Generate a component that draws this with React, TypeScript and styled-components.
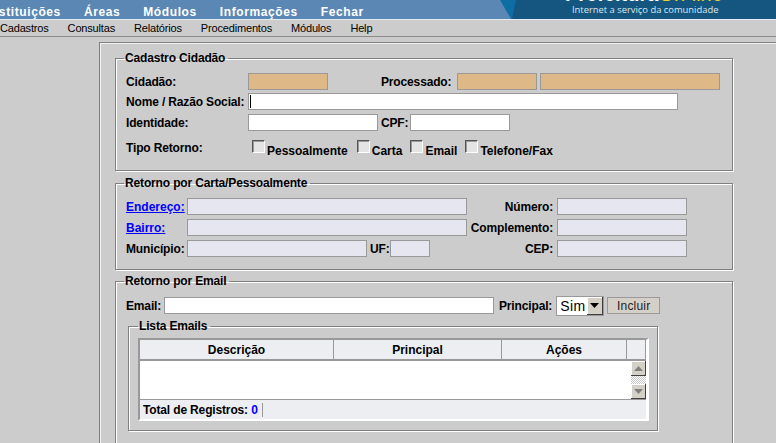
import React from "react";
import styled, { createGlobalStyle } from "styled-components";

const Global = createGlobalStyle`
  html, body { margin: 0; padding: 0; background: #cccccc; }
  body { font-family: "Liberation Sans", Arial, sans-serif; font-size: 12px; color: #000; }
`;

const Page = styled.div`
  width: 776px;
  height: 443px;
  overflow: hidden;
`;

const Header = styled.header`
  display: flex;
  height: 19px;
  background: #5b87b5;
  border-bottom: 1px solid #e4ecf2;
  overflow: hidden;
`;
const TopNav = styled.nav`
  display: flex;
  gap: 23px;
  margin-left: -13px;
  padding-top: 5px;
`;
const TopLink = styled.a`
  color: #fff;
  font-weight: 700;
  font-size: 12px;
  line-height: 14px;
  letter-spacing: 0.6px;
`;
const Brand = styled.div`
  margin-left: auto;
  width: 276px;
  position: relative;
  background: #0c6ea3;
  clip-path: polygon(0 0, 100% 0, 100% 100%, 11px 100%);
  display: flex;
  flex-direction: column;
  align-items: flex-start;
  padding-left: 72px;
  box-sizing: border-box;

  &::before {
    content: "";
    position: absolute;
    inset: 0;
    background: #14567f;
    clip-path: polygon(16px 0, 100% 0, 100% 100%, 12px 100%);
  }
`;
const Wordmark = styled.div`
  position: relative;
  margin-top: -15px;
  margin-left: -7px;
  font-size: 20px;
  line-height: 18px;
  font-weight: 700;
  color: #fff;
  white-space: nowrap;
`;
const WordmarkAccent = styled.span`
  color: #e8d22e;
  font-weight: 400;
`;
const Slogan = styled.div`
  position: relative;
  margin-top: 1px;
  font-family: "Open Sans", sans-serif;
  font-size: 9.4px;
  line-height: 12px;
  color: #dbe6ee;
  white-space: nowrap;
`;

const SubMenu = styled.nav`
  display: flex;
  gap: 19px;
  height: 16px;
  border-bottom: 1px solid #8a8a8a;
  align-items: center;
`;
const SubLink = styled.a`
  font-size: 11px;
  line-height: 16px;
  letter-spacing: -0.17px;
  color: #000;
`;

const Panel = styled.main`
  width: 900px;
  margin: 5px 0 0 99px;
  padding: 0 0 0 15px;
  box-sizing: border-box;
  border-top: 1px solid #808080;
  border-left: 1px solid #808080;
  box-shadow: inset 1px 1px 0 #f0f0f0;
  height: 500px;
`;

const Group = styled.fieldset<{ $w: number; $h: number; $top: number }>`
  width: ${({ $w }) => $w}px;
  height: ${({ $h }) => $h}px;
  margin: ${({ $top }) => $top}px 0 0 0;
  padding: 0 0 0 10px;
  box-sizing: border-box;
  border: 1px solid #808080;
  box-shadow: 1px 1px 0 #fff, inset 1px 1px 0 #fff;
`;
const NestedGroup = styled(Group)`
  margin-left: 2px;
  padding-left: 9px;
`;
const GroupTitle = styled.legend<{ $ml?: number }>`
  font-weight: 700;
  font-size: 12px;
  line-height: 14px;
  letter-spacing: -0.15px;
  padding: 0 3px 0 1px;
  margin-left: ${({ $ml }) => $ml ?? -2}px;
`;

const Row = styled.div<{ $top: number }>`
  display: flex;
  align-items: center;
  height: 17px;
  margin-top: ${({ $top }) => $top}px;
`;
const Label = styled.label<{ $w?: number; $right?: boolean; $ml?: number }>`
  font-weight: 700;
  font-size: 12px;
  letter-spacing: -0.15px;
  white-space: nowrap;
  flex: none;
  width: ${({ $w }) => ($w ? `${$w}px` : "auto")};
  margin-left: ${({ $ml }) => $ml ?? 0}px;
  text-align: ${({ $right }) => ($right ? "right" : "left")};
`;
const LinkLabel = styled.a<{ $w: number }>`
  font-weight: 700;
  font-size: 12px;
  color: #0000ff;
  text-decoration: underline;
  flex: none;
  width: ${({ $w }) => $w}px;
`;
const toneColor = { white: "#ffffff", peach: "#deb887", lilac: "#e6e6f0" };
const Field = styled.input<{ $w: number; $tone: keyof typeof toneColor; $ml?: number }>`
  width: ${({ $w }) => $w}px;
  height: 17px;
  box-sizing: border-box;
  flex: none;
  padding: 0 2px;
  margin: 0 0 0 ${({ $ml }) => $ml ?? 0}px;
  border: 1px solid #999999;
  background: ${({ $tone }) => toneColor[$tone]};
  outline: none;
`;
const CaretWrap = styled.div`
  position: relative;
  display: flex;
`;
const Caret = styled.span`
  position: absolute;
  left: 2px;
  top: 2px;
  width: 1px;
  height: 13px;
  background: #000;
`;

const ChoiceRow = styled.div`
  display: flex;
  height: 20px;
  margin-top: 9px;
`;
const ChoiceTitle = styled.div`
  font-weight: 700;
  font-size: 12px;
  letter-spacing: -0.15px;
  width: 126px;
  line-height: 14px;
  padding-top: 1px;
  flex: none;
`;
const Choice = styled.label<{ $gap: number }>`
  display: flex;
  font-weight: 700;
  font-size: 12px;
  line-height: 14px;
  margin-right: ${({ $gap }) => $gap}px;
`;
const Tick = styled.input`
  appearance: none;
  width: 13px;
  height: 13px;
  margin: 0 2px 0 0;
  box-sizing: border-box;
  border: 1px solid;
  border-color: #555 #fff #fff #555;
  box-shadow: inset 1px 1px 0 #999;
  background: #e4e4e4;
`;
const ChoiceText = styled.span`
  margin-top: 4px;
`;

const Picker = styled.div`
  display: flex;
  flex: none;
  width: 48px;
  height: 20px;
  margin-left: 4px;
  box-sizing: border-box;
  border: 1px solid #999;
  background: #fff;
`;
const PickerValue = styled.span`
  flex: 1;
  font-size: 14px;
  line-height: 18px;
  padding-left: 3px;
  letter-spacing: 0.4px;
`;
const PickerButton = styled.span`
  width: 15px;
  display: flex;
  align-items: center;
  justify-content: center;
  background: #d4d0c8;
  border-right: 1px solid #404040;
  border-bottom: 1px solid #404040;
  box-shadow: inset 1px 1px 0 #fff;
`;
const ActionButton = styled.button`
  width: 53px;
  height: 17px;
  margin-left: 3px;
  padding: 0;
  flex: none;
  border: 1px solid #999;
  background: #d4d0c8;
  font-family: "Liberation Sans", Arial, sans-serif;
  font-size: 12px;
  color: #222;
  letter-spacing: 0.2px;
`;

const ListFrame = styled.div`
  width: 511px;
  height: 83px;
  margin: 5px 0 0 0;
  box-sizing: border-box;
  border-style: solid;
  border-width: 2px 3px 2px 2px;
  border-color: #999 #fff #fff #999;
  display: flex;
  flex-direction: column;
  background: #fff;
`;
const ListHead = styled.div`
  display: grid;
  grid-template-columns: 194px 168px 125px 19px;
  height: 21px;
  flex: none;
  box-sizing: border-box;
  border-bottom: 2px solid #999;
  background: #eceef2;
`;
const HeadCell = styled.div`
  font-weight: 700;
  font-size: 12px;
  line-height: 20px;
  text-align: center;
  border-right: 1px solid #999;
`;
const ListBody = styled.div`
  flex: 1;
  display: flex;
  justify-content: flex-end;
  border-bottom: 1px solid #999;
  width: 506px;
`;
const Scroller = styled.div`
  width: 15px;
  display: flex;
  flex-direction: column;
`;
const ScrollButton = styled.div`
  height: 15px;
  display: flex;
  align-items: center;
  justify-content: center;
  box-sizing: border-box;
  background: #d4d0c8;
  border-right: 1px solid #404040;
  border-bottom: 1px solid #404040;
  box-shadow: inset 1px 1px 0 #fff;
`;
const ScrollTrack = styled.div`
  flex: 1;
  background: repeating-conic-gradient(#c8c8c8 0 25%, #fff 0 50%) 0 0 / 2px 2px;
`;
const ListFoot = styled.div`
  height: 19px;
  flex: none;
  width: 506px;
  background: #eceef2;
  display: flex;
  align-items: center;
  padding-left: 3px;
  box-sizing: border-box;
`;
const FootText = styled.span`
  font-weight: 700;
  font-size: 12px;
  letter-spacing: -0.15px;
  padding-right: 4px;
  border-right: 1px solid #999;
  line-height: 14px;
`;
const Count = styled.span`
  color: #0000ff;
`;

const Arrow = ({ up, color }: { up?: boolean; color: string }) => (
  <svg width="9" height="5" viewBox="0 0 9 5">
    <path d={up ? "M4.5 0 L9 5 L0 5 Z" : "M0 0 L9 0 L4.5 5 Z"} fill={color} />
  </svg>
);

export default function App() {
  return (
    <Page>
      <Global />
      <Header>
        <TopNav>
          {["Instituições", "Áreas", "Módulos", "Informações", "Fechar"].map((t) => (
            <TopLink key={t}>{t}</TopLink>
          ))}
        </TopNav>
        <Brand>
          <Wordmark>
            Prefeitura<WordmarkAccent>On-line</WordmarkAccent>
          </Wordmark>
          <Slogan>Internet a serviço da comunidade</Slogan>
        </Brand>
      </Header>
      <SubMenu>
        {["Cadastros", "Consultas", "Relatórios", "Procedimentos", "Módulos", "Help"].map((t) => (
          <SubLink key={t}>{t}</SubLink>
        ))}
      </SubMenu>
      <Panel>
        <Group $w={618} $h={120} $top={8}>
          <GroupTitle>Cadastro Cidadão</GroupTitle>
          <Row $top={8}>
            <Label $w={122}>Cidadão:</Label>
            <Field $w={80} $tone="peach" />
            <Label $w={53} />
            <Label $w={76}>Processado:</Label>
            <Field $w={80} $tone="peach" />
            <Field $w={180} $tone="peach" $ml={3} />
          </Row>
          <Row $top={3}>
            <Label $w={122}>Nome / Razão Social:</Label>
            <CaretWrap>
              <Field $w={430} $tone="white" />
              <Caret />
            </CaretWrap>
          </Row>
          <Row $top={4}>
            <Label $w={122}>Identidade:</Label>
            <Field $w={130} $tone="white" />
            <Label $ml={3} $w={29}>CPF:</Label>
            <Field $w={100} $tone="white" />
          </Row>
          <ChoiceRow>
            <ChoiceTitle>Tipo Retorno:</ChoiceTitle>
            <Choice $gap={9}><Tick type="checkbox" /><ChoiceText>Pessoalmente</ChoiceText></Choice>
            <Choice $gap={8}><Tick type="checkbox" /><ChoiceText>Carta</ChoiceText></Choice>
            <Choice $gap={8}><Tick type="checkbox" /><ChoiceText>Email</ChoiceText></Choice>
            <Choice $gap={0}><Tick type="checkbox" /><ChoiceText>Telefone/Fax</ChoiceText></Choice>
          </ChoiceRow>
        </Group>
        <Group $w={618} $h={94} $top={5}>
          <GroupTitle>Retorno por Carta/Pessoalmente</GroupTitle>
          <Row $top={8}>
            <LinkLabel $w={61}>Endereço:</LinkLabel>
            <Field $w={280} $tone="lilac" />
            <Label $w={86} $right>Número:</Label>
            <Field $w={130} $tone="lilac" $ml={4} />
          </Row>
          <Row $top={4}>
            <LinkLabel $w={61}>Bairro:</LinkLabel>
            <Field $w={280} $tone="lilac" />
            <Label $w={86} $right>Complemento:</Label>
            <Field $w={130} $tone="lilac" $ml={4} />
          </Row>
          <Row $top={4}>
            <Label $w={61}>Município:</Label>
            <Field $w={180} $tone="lilac" />
            <Label $ml={3} $w={20}>UF:</Label>
            <Field $w={40} $tone="lilac" />
            <Label $w={123} $right>CEP:</Label>
            <Field $w={130} $tone="lilac" $ml={4} />
          </Row>
        </Group>
        <Group $w={618} $h={200} $top={4}>
          <GroupTitle>Retorno por Email</GroupTitle>
          <Row $top={9}>
            <Label $w={38}>Email:</Label>
            <Field $w={330} $tone="white" />
            <Label $ml={5}>Principal:</Label>
            <Picker>
              <PickerValue>Sim</PickerValue>
              <PickerButton><Arrow color="#000" /></PickerButton>
            </Picker>
            <ActionButton>Incluir</ActionButton>
          </Row>
          <NestedGroup $w={530} $h={112} $top={5}>
            <GroupTitle $ml={0}>Lista Emails</GroupTitle>
            <ListFrame>
              <ListHead>
                <HeadCell>Descrição</HeadCell>
                <HeadCell>Principal</HeadCell>
                <HeadCell>Ações</HeadCell>
                <HeadCell />
              </ListHead>
              <ListBody>
                <Scroller>
                  <ScrollButton><Arrow up color="#808080" /></ScrollButton>
                  <ScrollTrack />
                  <ScrollButton><Arrow color="#808080" /></ScrollButton>
                </Scroller>
              </ListBody>
              <ListFoot>
                <FootText>Total de Registros: <Count>0</Count></FootText>
              </ListFoot>
            </ListFrame>
          </NestedGroup>
        </Group>
      </Panel>
    </Page>
  );
}
